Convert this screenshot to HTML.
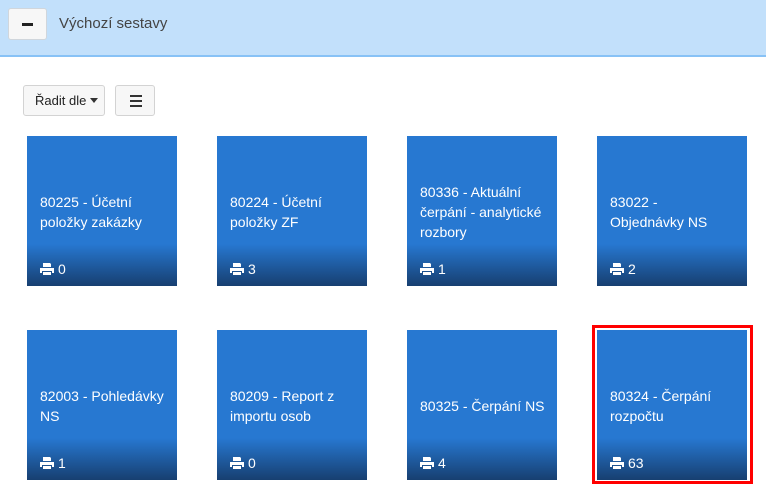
<!DOCTYPE html>
<html><head><meta charset="utf-8"><style>
*{box-sizing:border-box;margin:0;padding:0}
body{width:766px;height:492px;background:#fff;font-family:"Liberation Sans",sans-serif;position:relative;overflow:hidden}
.hdr{position:absolute;left:0;top:0;width:766px;height:57px;background:#c2e0fb;border-bottom:2px solid #88c2f6}
.mbtn{position:absolute;left:8px;top:8px;width:39px;height:32px;background:#f7f7f7;border:1px solid #d0d6dc;border-radius:3px}
.mbtn i{position:absolute;left:13px;top:14px;width:11px;height:3px;background:#222}
.title{position:absolute;left:59px;top:15px;font-size:15px;color:#444}
.sort{position:absolute;left:23px;top:85px;width:82px;height:31px;background:#f7f7f7;border:1px solid #d3d3d3;border-radius:3px;font-size:13px;color:#222;padding:7px 0 0 11px}
.sort b{display:inline-block;width:0;height:0;border-left:4px solid transparent;border-right:4px solid transparent;border-top:5px solid #333;margin-left:4px;vertical-align:2px}
.list{position:absolute;left:115px;top:85px;width:40px;height:31px;background:#f7f7f7;border:1px solid #d3d3d3;border-radius:3px}
.list i{position:absolute;left:14px;width:12px;height:2px;background:#333}
.tile{position:absolute;width:150px;height:150px;background:#2778d1;color:#fff;font-size:14px;line-height:20px}
.tile:after{content:"";position:absolute;left:0;right:0;bottom:0;height:42px;background:linear-gradient(#2778d1,#173f70)}
.t{position:absolute;left:13px;right:6px;top:0;bottom:42px;display:flex;align-items:center;padding-top:44px;z-index:1}
.f{position:absolute;left:13px;bottom:7px;z-index:1;font-size:14px;display:flex;align-items:center}
.f svg{margin-right:4px}
.sel{position:absolute;left:592px;top:325px;width:161px;height:159px;border:3px solid #f00}
</style></head><body>
<div class="hdr"><div class="mbtn"><i></i></div><div class="title">Výchozí sestavy</div></div>
<div class="sort">Řadit dle<b></b></div>
<div class="list"><i style="top:9px"></i><i style="top:14px"></i><i style="top:19px"></i></div>

<div class="tile" style="left:27px;top:136px"><div class="t">80225 - Účetní položky zakázky</div><div class="f"><svg width="14" height="12" viewBox="0 0 14 12"><path d="M3 0h7l1 1v3H3z M0 5h14v5h-2V8H2v2H0z M3 9h8v3H3z" fill="#fff"/></svg>0</div></div>
<div class="tile" style="left:217px;top:136px"><div class="t">80224 - Účetní položky ZF</div><div class="f"><svg width="14" height="12" viewBox="0 0 14 12"><path d="M3 0h7l1 1v3H3z M0 5h14v5h-2V8H2v2H0z M3 9h8v3H3z" fill="#fff"/></svg>3</div></div>
<div class="tile" style="left:407px;top:136px"><div class="t">80336 - Aktuální čerpání - analytické rozbory</div><div class="f"><svg width="14" height="12" viewBox="0 0 14 12"><path d="M3 0h7l1 1v3H3z M0 5h14v5h-2V8H2v2H0z M3 9h8v3H3z" fill="#fff"/></svg>1</div></div>
<div class="tile" style="left:597px;top:136px"><div class="t"><span>83022 -<br>Objednávky NS</span></div><div class="f"><svg width="14" height="12" viewBox="0 0 14 12"><path d="M3 0h7l1 1v3H3z M0 5h14v5h-2V8H2v2H0z M3 9h8v3H3z" fill="#fff"/></svg>2</div></div>

<div class="tile" style="left:27px;top:330px"><div class="t">82003 - Pohledávky NS</div><div class="f"><svg width="14" height="12" viewBox="0 0 14 12"><path d="M3 0h7l1 1v3H3z M0 5h14v5h-2V8H2v2H0z M3 9h8v3H3z" fill="#fff"/></svg>1</div></div>
<div class="tile" style="left:217px;top:330px"><div class="t">80209 - Report z importu osob</div><div class="f"><svg width="14" height="12" viewBox="0 0 14 12"><path d="M3 0h7l1 1v3H3z M0 5h14v5h-2V8H2v2H0z M3 9h8v3H3z" fill="#fff"/></svg>0</div></div>
<div class="tile" style="left:407px;top:330px"><div class="t">80325 - Čerpání NS</div><div class="f"><svg width="14" height="12" viewBox="0 0 14 12"><path d="M3 0h7l1 1v3H3z M0 5h14v5h-2V8H2v2H0z M3 9h8v3H3z" fill="#fff"/></svg>4</div></div>
<div class="sel"></div>
<div class="tile" style="left:597px;top:330px"><div class="t">80324 - Čerpání rozpočtu</div><div class="f"><svg width="14" height="12" viewBox="0 0 14 12"><path d="M3 0h7l1 1v3H3z M0 5h14v5h-2V8H2v2H0z M3 9h8v3H3z" fill="#fff"/></svg>63</div></div>
</body></html>
